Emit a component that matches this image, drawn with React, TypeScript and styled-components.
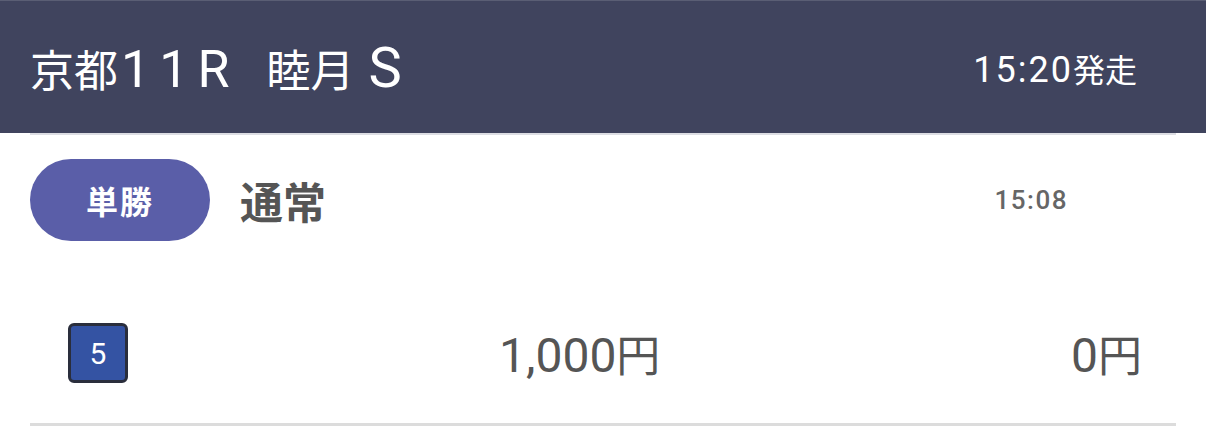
import styled, { createGlobalStyle } from "styled-components";

const GlobalStyle = createGlobalStyle`
  body {
    margin: 0;
    background: #fff;
    font-family: Roboto, "Noto Sans CJK JP", sans-serif;
  }
`;

const bet = {
  venue: "京都",
  race: "11R",
  name: "睦月",
  grade: "S",
  start: "15:20",
  type: "単勝",
  mode: "通常",
  time: "15:08",
  horse: 5,
  stake: "1,000",
  payout: "0",
};

export default function App() {
  return (
    <>
      <GlobalStyle />
      <S.Page>
        <S.Header>
          <S.Title>
            {bet.venue}
            <S.Latin>{bet.race}</S.Latin>
            <S.TitleGap />
            {bet.name}
            <S.Grade>{bet.grade}</S.Grade>
          </S.Title>
          <S.Start>
            <S.StartTime>{bet.start}</S.StartTime>発走
          </S.Start>
        </S.Header>
        <S.Divider />
        <S.TypeRow>
          <S.Pill>{bet.type}</S.Pill>
          <S.Mode>{bet.mode}</S.Mode>
          <S.Time>{bet.time}</S.Time>
        </S.TypeRow>
        <S.AmountRow>
          <S.Horse>{bet.horse}</S.Horse>
          <S.Stake>
            {bet.stake}
            <S.Yen>円</S.Yen>
          </S.Stake>
          <S.Payout>
            {bet.payout}
            <S.Yen>円</S.Yen>
          </S.Payout>
        </S.AmountRow>
        <S.Bottom />
      </S.Page>
    </>
  );
}

const S = {
  Page: styled.div`
    width: 1206px;
  `,

  Header: styled.header`
    height: 133px;
    background: #40445e;
    border-top: 1px solid #5a5e74;
    box-sizing: border-box;
    display: flex;
    align-items: center;
    justify-content: space-between;
    padding: 2px 69px 0 30px;
    color: #fff;
  `,

  Title: styled.h1`
    margin: 0;
    font-size: 44px;
    font-weight: 400;
    display: flex;
    align-items: baseline;
  `,

  Latin: styled.span`
    font-size: 52px;
    letter-spacing: 9px;
    margin-left: 3px;
  `,

  Grade: styled.span`
    font-size: 56px;
    margin-left: 14px;
  `,

  TitleGap: styled.span`
    display: inline-block;
    width: 28px;
  `,

  Start: styled.div`
    font-size: 32px;
    font-weight: 400;
    display: flex;
    align-items: baseline;
  `,

  StartTime: styled.span`
    font-size: 36px;
    letter-spacing: 2px;
  `,

  Divider: styled.div`
    height: 2px;
    margin: 0 30px;
    background: #dcdde3;
  `,

  TypeRow: styled.div`
    display: flex;
    align-items: center;
    padding: 24px 30px 0;
    height: 82px;
  `,

  Pill: styled.div`
    width: 180px;
    height: 82px;
    border-radius: 41px;
    background: #5a5ea8;
    color: #fff;
    font-size: 32px;
    font-weight: 700;
    letter-spacing: 2px;
    display: flex;
    align-items: center;
    justify-content: center;
  `,

  Mode: styled.div`
    margin-left: 30px;
    font-size: 43px;
    font-weight: 700;
    color: #555;
  `,

  Time: styled.div`
    margin-left: auto;
    margin-right: 108px;
    font-size: 26px;
    font-weight: 500;
    letter-spacing: 1.5px;
    color: #666;
  `,

  AmountRow: styled.div`
    display: flex;
    align-items: center;
    height: 60px;
    margin-top: 82px;
    padding: 0 64px 0 68px;
  `,

  Horse: styled.div`
    width: 60px;
    height: 60px;
    box-sizing: border-box;
    border: 3px solid #2a2e3c;
    border-radius: 6px;
    background: #3453a3;
    color: #fff;
    font-size: 30px;
    font-weight: 400;
    display: flex;
    align-items: center;
    justify-content: center;
  `,

  Stake: styled.div`
    margin-left: 371px;
    font-size: 48px;
    color: #555;
    display: flex;
    align-items: baseline;
  `,

  Payout: styled.div`
    margin-left: auto;
    font-size: 48px;
    color: #555;
    display: flex;
    align-items: baseline;
  `,

  Yen: styled.span`
    font-size: 44px;
  `,

  Bottom: styled.div`
    height: 3px;
    margin: 40px 30px 0;
    background: #dcdcdc;
  `,
};
